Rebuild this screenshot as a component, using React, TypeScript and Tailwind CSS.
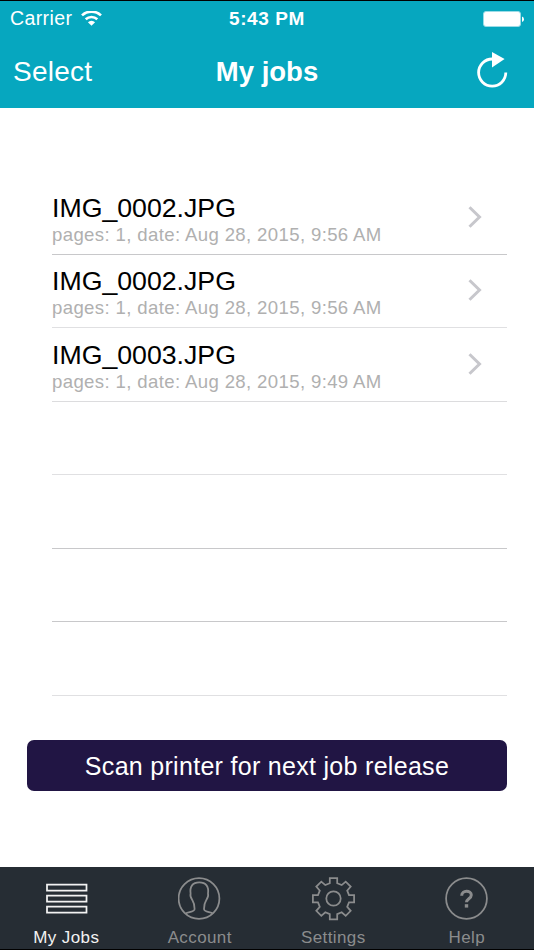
import type { ReactNode } from 'react';

type Job = { name: string; pages: number; date: string };

const JOBS: Job[] = [
  { name: 'IMG_0002.JPG', pages: 1, date: 'Aug 28, 2015, 9:56 AM' },
  { name: 'IMG_0002.JPG', pages: 1, date: 'Aug 28, 2015, 9:56 AM' },
  { name: 'IMG_0003.JPG', pages: 1, date: 'Aug 28, 2015, 9:49 AM' },
];

// The list always shows seven rows, the last ones may be empty
const ROWS = [
  { height: 'h-[74px]', line: 'border-[#c8c8ca]' },
  { height: 'h-[73px]', line: 'border-[#e0e0e2]' },
  { height: 'h-[74px]', line: 'border-[#dcdcde]' },
  { height: 'h-[73px]', line: 'border-[#e0e0e2]' },
  { height: 'h-[74px]', line: 'border-[#c8c8ca]' },
  { height: 'h-[73px]', line: 'border-[#c8c8ca]' },
  { height: 'h-[74px]', line: 'border-[#e0e0e2]' },
];

function StatusBar() {
  return (
    <div className="grid h-[36px] grid-cols-3 items-center px-[10px]">
      <div className="flex items-center gap-[9px]">
        <span className="text-[19.5px] tracking-[0.4px]">Carrier</span>
        <svg width="21" height="16" viewBox="0 0 21 16" fill="none" stroke="currentColor" strokeWidth="2.6">
          <path d="M1 4.4a13.8 13.8 0 0 1 19 0" />
          <path d="M4.7 8.3a8.5 8.5 0 0 1 11.6 0" />
          <path d="M10.5 14.8 6.900 11.300a5 5 0 0 1 7.200 0Z" fill="currentColor" stroke="none" />
        </svg>
      </div>
      <span className="text-center text-[19px] font-bold tracking-[0.6px]">5:43 PM</span>
      <svg className="justify-self-end" width="41" height="17" viewBox="0 0 41 17">
        <rect x="0.5" y="0.5" width="37" height="15" rx="2.5" fill="white" stroke="#9bdce7" />
        <path d="M39 5.5v5.4q2-.7 2-2.7t-2-2.7Z" fill="white" />
      </svg>
    </div>
  );
}

function NavBar() {
  return (
    <div className="grid h-[71px] grid-cols-3 items-center pb-[1px] pl-[13px] pr-[26px]">
      <span className="text-[28px] tracking-[0.25px]">Select</span>
      <span className="pl-[13px] text-center text-[27.5px] font-bold whitespace-nowrap">My jobs</span>
      <svg className="-mt-[4px] justify-self-end" width="32" height="38" viewBox="0 0 32 38" fill="none">
        <path d="M16.2 8A13.6 13.6 0 1 0 29.8 21.6" stroke="white" strokeWidth="2.8" />
        <path d="M16 1v15.5l12.600-8.400Z" fill="white" />
      </svg>
    </div>
  );
}

function JobRow({ job }: { job: Job }) {
  return (
    <div className="flex h-full items-center justify-between pr-[25px] pb-[2px]">
      <div className="pt-[3px]">
        <div className="text-[26.7px] leading-[32px] text-black">{job.name}</div>
        <div className="text-[18.6px] leading-[21px] tracking-[0.36px] text-[#b0b0b0]">
          pages: {job.pages}, date: {job.date}
        </div>
      </div>
      <svg width="14" height="22" viewBox="0 0 14 22" fill="none" stroke="#c7c7cc" strokeWidth="3">
        <path d="M1.5 1.2 11.5 11l-10 9.8" />
      </svg>
    </div>
  );
}

function Tab({ label, active, children }: { label: string; active?: boolean; children: ReactNode }) {
  return (
    <div className={`flex flex-col items-center pt-[10px] ${active ? 'text-[#f2f2f2]' : 'text-[#8b8c8d]'}`}>
      <svg width="44" height="44" viewBox="0 0 44 44" fill="none" stroke="currentColor" strokeWidth="1.75">
        {children}
      </svg>
      <span className="mt-[7px] pr-px text-[17px] leading-[20px] tracking-[0.4px]">{label}</span>
    </div>
  );
}

export default function App() {
  return (
    <div className="flex h-[950px] w-[534px] flex-col border-y border-black bg-white font-['Liberation_Sans',sans-serif]">
      <header className="h-[107px] bg-[#06a7bf] text-white">
        <StatusBar />
        <NavBar />
      </header>

      <main className="flex-1 px-[27px] pt-[73px]">
        <ul className="pl-[25px]">
          {ROWS.map((row, i) => (
            <li key={i} className={`border-b ${row.height} ${row.line}`}>
              {JOBS[i] && <JobRow job={JOBS[i]} />}
            </li>
          ))}
        </ul>
        <button className="mt-[44px] flex h-[51px] w-full items-center justify-center rounded-[7px] bg-[#211544] pt-[2px] text-[25px] tracking-[0.3px] text-white">
          Scan printer for next job release
        </button>
      </main>

      <nav className="grid h-[82px] grid-cols-4 bg-[#262d34]">
        <Tab label="My Jobs" active>
          <path d="M2 7.500h39.500v6H2ZM2 18.500h39.500v6H2ZM2 29.500h39.500v6H2Z" />
        </Tab>
        <Tab label="Account">
          <circle cx="21" cy="21.5" r="20.4" />
          <path d="M7.800 36.500c2.200-1.800 8.800-1.200 8.800-4.500 0-4.500-.4-6-2.300-9-1.300-2-2.600-3.800-1.700-6.300-1-7.200 1.900-11.300 8.700-11.300s9.700 4.100 8.700 11.300c.9 2.500-.4 4.300-1.700 6.300-1.900 3-2.300 4.500-2.300 9 0 3.300 6.600 2.700 8.800 4.500" />
        </Tab>
        <Tab label="Settings">
          <circle cx="21.500" cy="21.500" r="7.200" />
          <path d="M17.800 1h7.400v5.200l4.500 1.900 4-3.500 5 5-3.500 4L37 18h5.100v7.400H37l-1.800 4.400 3.500 4-5 5-4-3.500-4.500 1.900v5.200h-7.400v-5.200l-4.500-1.900-4 3.500-5-5 3.500-4L6 25.400H.9V18H6l1.800-4.400-3.500-4 5-5 4 3.500 4.500-1.900Z" />
        </Tab>
        <Tab label="Help">
          <circle cx="21.500" cy="21.500" r="20.400" />
          <path d="M16.700 18.700c0-6 9.600-5.800 9.600-.7 0 3.600-4.800 3.800-4.800 7.200" strokeWidth="3" />
          <path d="M21.500 27.200v3.400" strokeWidth="3.400" />
        </Tab>
      </nav>
    </div>
  );
}
